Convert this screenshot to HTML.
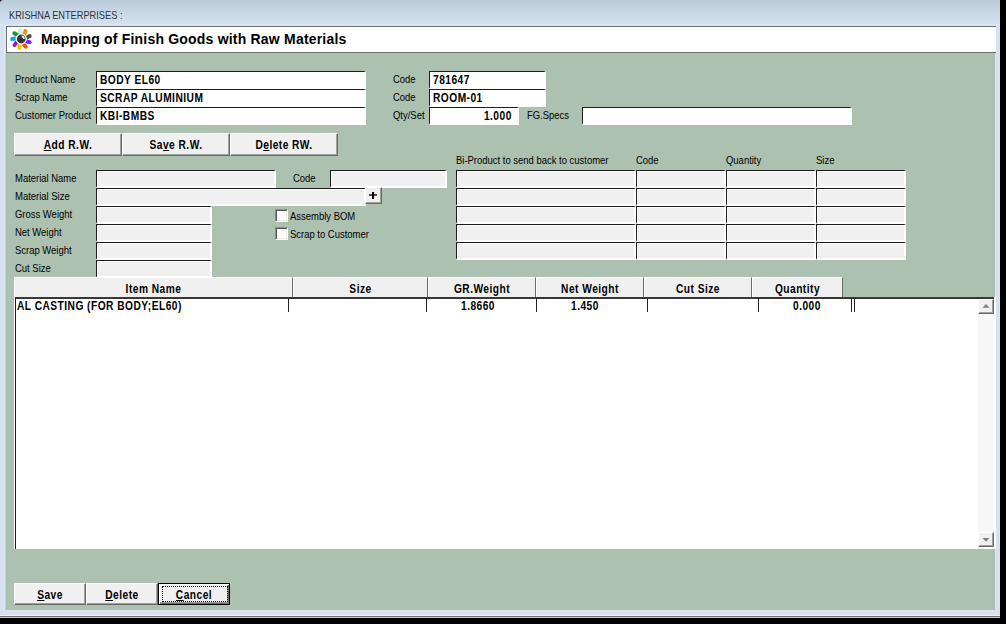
<!DOCTYPE html>
<html><head><meta charset="utf-8">
<style>
*{margin:0;padding:0;box-sizing:border-box}
html,body{width:1006px;height:624px;overflow:hidden;background:#000}
body{position:relative;font-family:"Liberation Sans",sans-serif}
.a{position:absolute}
#win{position:absolute;left:0;top:0;width:1000px;height:618px;background:linear-gradient(#bccbd9 0px,#d5e1f0 24px,#dde8f6 25px,#d6e2f0 27px);border-top-left-radius:3px}
#frameL{position:absolute;left:0;top:26px;width:6px;height:590px;background:#d6e2f0;box-shadow:inset -2px 0 0 #dde7f6}
#form{position:absolute;left:6px;top:53px;width:989px;height:557px;background:#adc1b1;box-shadow:-1px 0 0 #c2cfc9}
#bot{position:absolute;left:0;top:610px;width:1000px;height:5px;background:#d6e2f0}
.l{position:absolute;font-size:11px;line-height:13px;white-space:nowrap;color:#000;transform-origin:0 0;transform:scaleX(.86)}
.b{position:absolute;font-size:12px;line-height:13px;font-weight:bold;white-space:nowrap;color:#000;transform-origin:0 0;transform:scaleX(.85);letter-spacing:.55px}
.tb{position:absolute;height:18px;background:#fff;border-top:1px solid #1c1c1c;border-left:1px solid #1c1c1c;border-right:2px solid #fff;border-bottom:2px solid #fff}
.tb.g{background:#f0f0f0;box-shadow:inset 1px 1px 0 #fafafa}
.tb .b{left:3px;top:2px}
.btn{position:absolute;background:#f0f0f0;border-top:1px solid #fff;border-left:1px solid #fff;border-right:1px solid #696969;border-bottom:1px solid #696969;box-shadow:inset -1px -1px 0 #a0a0a0;font-size:12px;line-height:13px;font-weight:bold;text-align:center;color:#000}
.btn span{position:absolute;left:0;right:0;white-space:nowrap;transform:scaleX(.85);letter-spacing:.55px}
u{text-decoration:underline;text-underline-offset:1px;text-decoration-thickness:1px}
.chk{position:absolute;width:13px;height:13px;background:#fff;border-top:1px solid #8c8c8c;border-left:1px solid #8c8c8c;border-right:1px solid #fff;border-bottom:1px solid #fff;box-shadow:inset 1px 1px 0 #585858,inset -1px -1px 0 #ececec}
.hc{position:absolute;top:277px;height:20px;background:#f0f0f0;border-top:1px solid #fff;border-left:1px solid #fff;border-right:1px solid #6a6a6a}
.hc span{position:absolute;left:0;right:0;top:5px;text-align:center;font-size:12px;font-weight:bold;line-height:13px;white-space:nowrap;transform:scaleX(.85);letter-spacing:.55px}
.vl{position:absolute;top:298px;width:1px;height:14px;background:#222}
</style></head><body>
<div id="win"></div>
<div id="frameL"></div>
<div class="l" style="left:9px;top:9px;color:#2a3441;transform:scaleX(.84)">KRISHNA ENTERPRISES :</div>
<!-- title box -->
<div class="a" style="left:6px;top:26px;width:990px;height:27px;background:#fff;border:1px solid #6b716b;border-right:none"></div>
<svg class="a" style="left:8px;top:26px" width="28" height="27" viewBox="0 0 28 27">
 <g transform="translate(13.2,13)">
  <g transform="rotate(7)"><rect x="-1.9" y="-11.2" width="3.9" height="9" rx="1.9" fill="#e2e2e2" transform="rotate(-28 0 -3.5)"/></g>
  <g transform="rotate(45)"><rect x="-1.9" y="-11.2" width="3.9" height="9" rx="1.9" fill="#ff8a00" transform="rotate(-28 0 -3.5)"/></g>
  <g transform="rotate(88)"><rect x="-1.9" y="-11.2" width="3.9" height="9" rx="1.9" fill="#4b4d50" transform="rotate(-28 0 -3.5)"/></g>
  <g transform="rotate(127)"><rect x="-1.9" y="-11.2" width="3.9" height="9" rx="1.9" fill="#7a22ee" transform="rotate(-28 0 -3.5)"/></g>
  <g transform="rotate(167)"><rect x="-1.9" y="-11.2" width="3.9" height="9" rx="1.9" fill="#ff4d00" transform="rotate(-28 0 -3.5)"/></g>
  <g transform="rotate(208)"><rect x="-1.9" y="-11.2" width="3.9" height="9" rx="1.9" fill="#ffbb00" transform="rotate(-28 0 -3.5)"/></g>
  <g transform="rotate(245)"><rect x="-1.9" y="-11.2" width="3.9" height="9" rx="1.9" fill="#9c12c8" transform="rotate(-28 0 -3.5)"/></g>
  <g transform="rotate(287)"><rect x="-1.9" y="-11.2" width="3.9" height="9" rx="1.9" fill="#0aa2f2" transform="rotate(-28 0 -3.5)"/></g>
  <g transform="rotate(327)"><rect x="-1.9" y="-11.2" width="3.9" height="9" rx="1.9" fill="#0c9a3c" transform="rotate(-28 0 -3.5)"/></g>
  <circle r="5.7" fill="#fff"/>
  <circle r="4.4" fill="#2e3336"/>
  <path d="M0.4 -3.4 A3.3 3.3 0 0 1 3.5 0.1 L2 0.1 A1.7 1.7 0 0 0 0.4 -1.8 Z" fill="#fff"/>
 </g>
</svg>
<div class="b" style="left:41px;top:31px;font-size:14px;line-height:16px;letter-spacing:0.2px;transform:none">Mapping of Finish Goods with Raw Materials</div>

<div id="form"></div>
<div id="bot"></div>
<div class="a" style="left:0;top:615px;width:1000px;height:1px;background:#eef3fa"></div>
<div class="a" style="left:0;top:616px;width:1000px;height:1px;background:#6e6e6e"></div>
<div class="a" style="left:0;top:617px;width:1000px;height:1px;background:#c9c9c9"></div>

<!-- top fields -->
<div class="l" style="left:15px;top:73px">Product Name</div>
<div class="l" style="left:15px;top:91px">Scrap Name</div>
<div class="l" style="left:15px;top:109px">Customer Product</div>
<div class="tb" style="left:96px;top:71px;width:270px"><div class="b">BODY EL60</div></div>
<div class="tb" style="left:96px;top:89px;width:270px"><div class="b">SCRAP ALUMINIUM</div></div>
<div class="tb" style="left:96px;top:107px;width:270px"><div class="b">KBI-BMBS</div></div>
<div class="l" style="left:393px;top:73px">Code</div>
<div class="l" style="left:393px;top:91px">Code</div>
<div class="l" style="left:393px;top:109px">Qty/Set</div>
<div class="tb" style="left:429px;top:71px;width:117px"><div class="b">781647</div></div>
<div class="tb" style="left:429px;top:89px;width:117px"><div class="b">ROOM-01</div></div>
<div class="tb" style="left:429px;top:107px;width:90px"><div class="b" style="left:auto;right:5px;transform-origin:100% 0">1.000</div></div>
<div class="l" style="left:527px;top:109px">FG.Specs</div>
<div class="tb" style="left:582px;top:107px;width:270px"></div>

<!-- buttons row -->
<div class="btn" style="left:14px;top:133px;width:108px;height:23px"><span style="top:5px"><u>A</u>dd R.W.</span></div>
<div class="btn" style="left:122px;top:133px;width:108px;height:23px"><span style="top:5px">Sa<u>v</u>e R.W.</span></div>
<div class="btn" style="left:230px;top:133px;width:108px;height:23px"><span style="top:5px">D<u>e</u>lete RW.</span></div>

<!-- material -->
<div class="l" style="left:15px;top:172px">Material Name</div>
<div class="l" style="left:15px;top:190px">Material Size</div>
<div class="l" style="left:15px;top:208px">Gross Weight</div>
<div class="l" style="left:15px;top:226px">Net Weight</div>
<div class="l" style="left:15px;top:244px">Scrap Weight</div>
<div class="l" style="left:15px;top:262px">Cut Size</div>
<div class="tb g" style="left:96px;top:170px;width:180px"></div>
<div class="l" style="left:293px;top:172px">Code</div>
<div class="tb g" style="left:330px;top:170px;width:117px"></div>
<div class="tb g" style="left:96px;top:188px;width:270px"></div>
<div class="btn" style="left:365px;top:187px;width:17px;height:17px"></div>
<div class="a" style="left:369px;top:194px;width:8px;height:2px;background:#1a1a1a;transform:scaleY(.75)"></div>
<div class="a" style="left:372px;top:192px;width:2px;height:7px;background:#000"></div>
<div class="tb g" style="left:96px;top:206px;width:116px"></div>
<div class="tb g" style="left:96px;top:224px;width:116px"></div>
<div class="tb g" style="left:96px;top:242px;width:116px"></div>
<div class="tb g" style="left:96px;top:260px;width:116px"></div>

<div class="chk" style="left:275px;top:209px"></div>
<div class="l" style="left:290px;top:210px">Assembly BOM</div>
<div class="chk" style="left:275px;top:227px"></div>
<div class="l" style="left:290px;top:228px">Scrap to Customer</div>

<!-- bi product -->
<div class="l" style="left:456px;top:154px">Bi-Product to send back to customer</div>
<div class="l" style="left:636px;top:154px">Code</div>
<div class="l" style="left:726px;top:154px">Quantity</div>
<div class="l" style="left:816px;top:154px">Size</div>
<div class="tb g" style="left:456px;top:170px;width:180px"></div>
<div class="tb g" style="left:636px;top:170px;width:90px"></div>
<div class="tb g" style="left:726px;top:170px;width:90px"></div>
<div class="tb g" style="left:816px;top:170px;width:90px"></div>
<div class="tb g" style="left:456px;top:188px;width:180px"></div>
<div class="tb g" style="left:636px;top:188px;width:90px"></div>
<div class="tb g" style="left:726px;top:188px;width:90px"></div>
<div class="tb g" style="left:816px;top:188px;width:90px"></div>
<div class="tb g" style="left:456px;top:206px;width:180px"></div>
<div class="tb g" style="left:636px;top:206px;width:90px"></div>
<div class="tb g" style="left:726px;top:206px;width:90px"></div>
<div class="tb g" style="left:816px;top:206px;width:90px"></div>
<div class="tb g" style="left:456px;top:224px;width:180px"></div>
<div class="tb g" style="left:636px;top:224px;width:90px"></div>
<div class="tb g" style="left:726px;top:224px;width:90px"></div>
<div class="tb g" style="left:816px;top:224px;width:90px"></div>
<div class="tb g" style="left:456px;top:242px;width:180px"></div>
<div class="tb g" style="left:636px;top:242px;width:90px"></div>
<div class="tb g" style="left:726px;top:242px;width:90px"></div>
<div class="tb g" style="left:816px;top:242px;width:90px"></div>

<!-- grid -->
<div class="a" style="left:14px;top:297px;width:982px;height:252px;background:#fff"></div>
<div class="a" style="left:15px;top:297px;width:979px;height:252px;background:#fff;border-top:2px solid #383838;border-left:1px solid #1c1c1c"></div>
<div class="hc" style="left:14px;width:279px"><span>Item Name</span></div>
<div class="hc" style="left:293px;width:135px"><span>Size</span></div>
<div class="hc" style="left:428px;width:108px"><span>GR.Weight</span></div>
<div class="hc" style="left:536px;width:108px"><span>Net Weight</span></div>
<div class="hc" style="left:644px;width:108px"><span>Cut Size</span></div>
<div class="hc" style="left:752px;width:91px"><span>Quantity</span></div>
<div class="vl" style="left:288px"></div>
<div class="vl" style="left:426px"></div>
<div class="vl" style="left:536px"></div>
<div class="vl" style="left:647px"></div>
<div class="vl" style="left:758px"></div>
<div class="vl" style="left:851px"></div>
<div class="vl" style="left:854px"></div>
<div class="b" style="left:17px;top:300px">AL CASTING (FOR BODY;EL60)</div>
<div class="b" style="left:461px;top:300px">1.8660</div>
<div class="b" style="left:571px;top:300px">1.450</div>
<div class="b" style="left:793px;top:300px">0.000</div>
<!-- scrollbar -->
<div class="a" style="left:978px;top:299px;width:16px;height:248px;background:#f7f7f7"></div>
<div class="btn" style="left:978px;top:299px;width:16px;height:15px"></div>
<svg class="a" style="left:978px;top:299px" width="16" height="15"><path d="M4.5 8.7 L8 5 L11.5 8.7 Z" fill="#808080"/></svg>
<div class="btn" style="left:978px;top:532px;width:16px;height:15px"></div>
<svg class="a" style="left:978px;top:532px" width="16" height="15"><path d="M4.5 6 L11.5 6 L8 9.7 Z" fill="#808080"/></svg>

<!-- bottom buttons -->
<div class="btn" style="left:14px;top:583px;width:72px;height:22px"><span style="top:5px"><u>S</u>ave</span></div>
<div class="btn" style="left:86px;top:583px;width:72px;height:22px"><span style="top:5px"><u>D</u>elete</span></div>
<div class="btn" style="left:158px;top:583px;width:72px;height:22px;border:1px solid #000;box-shadow:inset 1px 1px 0 #fff,inset -1px -1px 0 #696969,inset -2px -2px 0 #a0a0a0"><span style="top:5px"><u>C</u>ancel</span><div class="a" style="left:3px;top:2px;width:66px;height:16px;border:1px dotted #000"></div></div>
</body></html>
